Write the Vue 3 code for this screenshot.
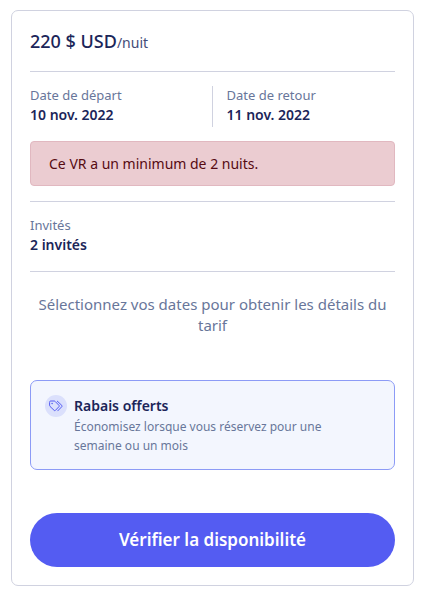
<script setup>
const dates = [
  { label: 'Date de départ', value: '10 nov. 2022' },
  { label: 'Date de retour', value: '11 nov. 2022' },
]
</script>

<template>
  <main class="card">
    <header class="price"><strong>220 $ USD</strong><span>/nuit</span></header>

    <section class="stay">
      <dl class="dates">
        <div v-for="date in dates" :key="date.label" class="field">
          <dt>{{ date.label }}</dt>
          <dd>{{ date.value }}</dd>
        </div>
      </dl>
      <p class="alert" role="alert">Ce VR a un minimum de 2 nuits.</p>
    </section>

    <dl class="guests">
      <div class="field">
        <dt>Invités</dt>
        <dd>2 invités</dd>
      </div>
    </dl>

    <p class="hint">Sélectionnez vos dates pour obtenir les détails du tarif</p>

    <aside class="promo">
      <span class="badge">
        <svg viewBox="0 0 14 12" width="14" height="12" fill="none" stroke="currentColor" stroke-linejoin="round" stroke-linecap="round" aria-hidden="true">
          <path d="M0.6 2Q0.6 1 1.6 1H5.2Q5.7 1 6.1 1.4L10 5.4Q10.6 6 10 6.6L6.4 10.4Q5.8 11 5.2 10.4L1 6.4Q0.6 6 0.6 5.5Z" />
          <path d="M8.3 1.2L12.8 5.4Q13.5 6 12.8 6.7L8.8 10.8" />
          <circle cx="3.1" cy="3.5" r="0.8" fill="currentColor" stroke="none" />
        </svg>
      </span>
      <div>
        <h2>Rabais offerts</h2>
        <p>Économisez lorsque vous réservez pour une semaine ou un mois</p>
      </div>
    </aside>

    <button type="button" class="submit">Vérifier la disponibilité</button>
  </main>
</template>

<style>
body {
  background: #fff;
}
</style>

<style scoped>
.card {
  margin: 10px 11px 9px;
  padding: 0 18px 18px;
  border: 1px solid #d0d2e0;
  border-radius: 7px;
  color: #1b2559;
  font-family: "Noto Sans", "Open Sans", sans-serif;
  font-size: 14px;
}

dl,
dd,
p,
h2 {
  margin: 0;
}

.price {
  padding: 16px 0 14px;
  border-bottom: 1px solid #d0d2e0;
  line-height: 28px;
}

.price strong {
  font-size: 18px;
  font-weight: 500;
}

.price span {
  color: #434c78;
}

.stay {
  padding: 14px 0 15px;
  border-bottom: 1px solid #d0d2e0;
}

.dates {
  display: grid;
  grid-template-columns: 1fr 1fr;
}

.dates .field:first-child {
  border-right: 1px solid #d0d2e0;
}

.dates .field + .field {
  padding-left: 14px;
}

.field dt {
  color: #68769a;
  font-size: 13px;
  line-height: 18px;
}

.field dd {
  padding-bottom: 1px;
  font-weight: 600;
  line-height: 22px;
}

.alert {
  margin-top: 14px;
  padding: 11px 18px;
  border: 1px solid #e1b8c0;
  border-radius: 4px;
  background: #ebccd1;
  color: #560a12;
  line-height: 21px;
}

.guests {
  padding: 14px 0;
  border-bottom: 1px solid #d0d2e0;
}

.hint {
  padding: 22px 0 44px;
  color: #68769a;
  font-size: 15px;
  line-height: 21px;
  text-align: center;
}

.promo {
  display: flex;
  gap: 7px;
  padding: 14px;
  border: 1px solid #8c9bf6;
  border-radius: 7px;
  background: #f3f6fe;
}

.badge {
  display: grid;
  flex: none;
  place-items: center;
  width: 22px;
  height: 22px;
  border-radius: 50%;
  background: #dbe0fc;
  color: #545cf2;
}

.promo h2 {
  font-size: 14px;
  font-weight: 600;
  line-height: 22px;
}

.promo p {
  max-width: 270px;
  color: #68769a;
  font-size: 12px;
  line-height: 19px;
}

.submit {
  display: block;
  width: 100%;
  margin-top: 43px;
  padding: 15px;
  border: 0;
  border-radius: 27px;
  background: #545cf2;
  color: #fff;
  font-family: inherit;
  font-size: 17px;
  font-weight: 600;
  line-height: 24px;
  cursor: pointer;
}
</style>
